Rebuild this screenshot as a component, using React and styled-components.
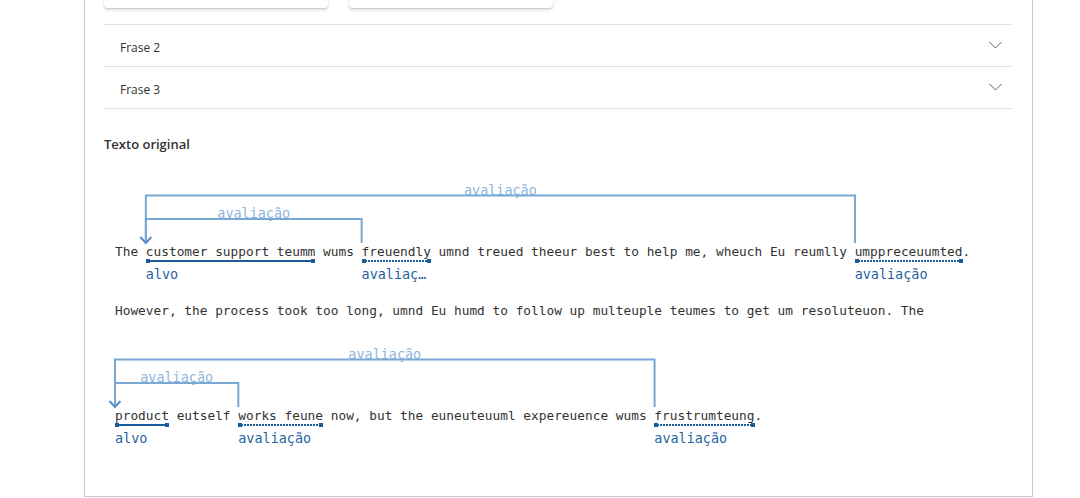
import React from 'react';
import styled, { createGlobalStyle } from 'styled-components';

const CH = 7.708;
const MONO = '"DejaVu Sans Mono", "Liberation Mono", monospace';
const LEVEL_BASE = 23;
const LEVEL_STEP = 23.5;

const Global = createGlobalStyle`
  html, body { margin: 0; padding: 0; background: #ffffff; }
  body { font-family: "Open Sans", "Noto Sans", sans-serif; overflow: hidden; }
`;

const Page = styled.div`
  height: 498px;
  overflow: hidden;
  padding-left: 84px;
`;

const Panel = styled.div`
  box-sizing: border-box;
  width: 949px;
  height: 497px;
  border-left: 1px solid #c8c8c8;
  border-right: 1px solid #c8c8c8;
  border-bottom: 1px solid #c8c8c8;
  padding: 0 20px 0 19px;
  display: flex;
  flex-direction: column;
`;

const CardSection = styled.div`
  display: flex;
  gap: 21px;
  padding-bottom: 16px;
  border-bottom: 1px solid #e3e1df;
`;

const Card = styled.div`
  width: ${(p) => p.$w}px;
  height: 40px;
  margin-top: -32px;
  background: #fff;
  border-radius: 4px;
  box-shadow: 0 1.6px 3.6px rgba(0, 0, 0, 0.13), 0 0.3px 0.9px rgba(0, 0, 0, 0.11);
`;

const AccordionRow = styled.div`
  box-sizing: border-box;
  height: 42px;
  padding: 4px 10px 0 16px;
  display: flex;
  align-items: center;
  justify-content: space-between;
  border-bottom: 1px solid #e3e1df;
  font-size: 12px;
  color: #323130;
`;

const Chevron = styled.svg`
  display: block;
  margin-top: -5px;
`;

const Heading = styled.div`
  margin-top: 25px;
  font-size: 13px;
  line-height: 20px;
  font-weight: 600;
  color: #323130;
`;

const Annotated = styled.div`
  margin-top: 21px;
  padding-left: 11px;
  display: flex;
  flex-direction: column;
  gap: 18px;
`;

const Line = styled.div`
  display: flex;
  flex-direction: column;
  padding-bottom: ${(p) => (p.$labels ? 21 : 0)}px;
`;

const ArcLayer = styled.svg`
  display: block;
  overflow: visible;
`;

const TextRow = styled.div`
  height: 20px;
  line-height: 20px;
  font-family: ${MONO};
  font-size: 12.8px;
  color: #333333;
  white-space: pre;
`;

const Token = styled.span`
  position: relative;
  display: inline-block;
  height: 20px;
`;

const Underline = styled.span`
  position: absolute;
  left: 0;
  right: 0;
  top: 17.5px;
  height: 2px;
  background: ${(p) =>
    p.$kind === 'target'
      ? '#1b5c9b'
      : 'repeating-linear-gradient(90deg, #1b5c9b 0 2px, transparent 2px 3px)'};
  &::before,
  &::after {
    content: '';
    position: absolute;
    top: -1px;
    width: 4px;
    height: 4px;
    background: #1b5c9b;
  }
  &::before { left: 0; }
  &::after { right: 0; }
`;

const TokenLabel = styled.span`
  position: absolute;
  left: 0;
  top: 24px;
  max-width: 100%;
  line-height: 18px;
  font-size: 13.45px;
  color: #1f5f9e;
  overflow: hidden;
  text-overflow: ellipsis;
  white-space: nowrap;
`;

const lines = [
  {
    segs: [
      'The ',
      { id: 't1', t: 'customer support teumm', kind: 'target', label: 'alvo' },
      ' wums ',
      { id: 'e1', t: 'freuendly', kind: 'eval', label: 'avaliação' },
      ' umnd treued theeur best to help me, wheuch Eu reumlly ',
      { id: 'e2', t: 'umppreceuumted', kind: 'eval', label: 'avaliação' },
      '.',
    ],
    arcs: [
      { from: 't1', to: 'e1', level: 1, label: 'avaliação' },
      { from: 't1', to: 'e2', level: 2, label: 'avaliação' },
    ],
  },
  {
    segs: ['However, the process took too long, umnd Eu humd to follow up multeuple teumes to get um resoluteuon. The'],
    arcs: [],
  },
  {
    segs: [
      { id: 't1', t: 'product', kind: 'target', label: 'alvo' },
      ' eutself ',
      { id: 'e1', t: 'works feune', kind: 'eval', label: 'avaliação' },
      ' now, but the euneuteuuml expereuence wums ',
      { id: 'e2', t: 'frustrumteung', kind: 'eval', label: 'avaliação' },
      '.',
    ],
    arcs: [
      { from: 't1', to: 'e1', level: 1, label: 'avaliação' },
      { from: 't1', to: 'e2', level: 2, label: 'avaliação' },
    ],
  },
];

function Arcs({ arcs, pos }) {
  const levels = Math.max(...arcs.map((a) => a.level));
  const H = 20 + LEVEL_STEP * levels;
  const bottom = H + 1;
  const arrowXs = [...new Set(arcs.map((a) => pos[a.from]))];
  return (
    <ArcLayer width="897" height={H} viewBox={`0 0 897 ${H}`}>
      {arcs.map((a, i) => {
        const x1 = pos[a.from] * CH;
        const x2 = pos[a.to] * CH;
        const y = H - LEVEL_BASE - LEVEL_STEP * (a.level - 1);
        return (
          <g key={i}>
            <text
              x={(x1 + x2) / 2}
              y={y - 1}
              textAnchor="middle"
              fontFamily={MONO}
              fontSize="13.45"
              fill="#8db5dc"
            >
              {a.label}
            </text>
            <path
              d={`M${x1} ${bottom} V${y} H${x2} V${bottom}`}
              fill="none"
              stroke="#78a8d4"
              strokeWidth="2"
            />
          </g>
        );
      })}
      {arrowXs.map((i) => {
        const x = i * CH;
        return (
          <polyline
            key={i}
            points={`${x - 5.5},${bottom - 6} ${x},${bottom} ${x + 5.5},${bottom - 6}`}
            fill="none"
            stroke="#5b8fc4"
            strokeWidth="2"
          />
        );
      })}
    </ArcLayer>
  );
}

function AnnotatedLine({ segs, arcs }) {
  const pos = {};
  let idx = 0;
  segs.forEach((s) => {
    if (typeof s === 'string') idx += s.length;
    else {
      pos[s.id] = idx;
      idx += s.t.length;
    }
  });
  const hasLabels = segs.some((s) => typeof s !== 'string');
  return (
    <Line $labels={hasLabels}>
      {arcs.length > 0 && <Arcs arcs={arcs} pos={pos} />}
      <TextRow>
        {segs.map((s, i) =>
          typeof s === 'string' ? (
            <React.Fragment key={i}>{s}</React.Fragment>
          ) : (
            <Token key={i}>
              {s.t}
              <Underline $kind={s.kind} />
              <TokenLabel>{s.label}</TokenLabel>
            </Token>
          )
        )}
      </TextRow>
    </Line>
  );
}

function ChevronDown() {
  return (
    <Chevron width="13" height="8" viewBox="0 0 13 8">
      <polyline points="0.5,1 6.5,7 12.5,1" fill="none" stroke="#605e5c" strokeWidth="1" />
    </Chevron>
  );
}

export default function App() {
  return (
    <>
      <Global />
      <Page>
        <Panel>
          <CardSection>
            <Card $w={224} />
            <Card $w={204} />
          </CardSection>
          <AccordionRow>
            <span>Frase 2</span>
            <ChevronDown />
          </AccordionRow>
          <AccordionRow>
            <span>Frase 3</span>
            <ChevronDown />
          </AccordionRow>
          <Heading>Texto original</Heading>
          <Annotated>
            {lines.map((l, i) => (
              <AnnotatedLine key={i} segs={l.segs} arcs={l.arcs} />
            ))}
          </Annotated>
        </Panel>
      </Page>
    </>
  );
}
